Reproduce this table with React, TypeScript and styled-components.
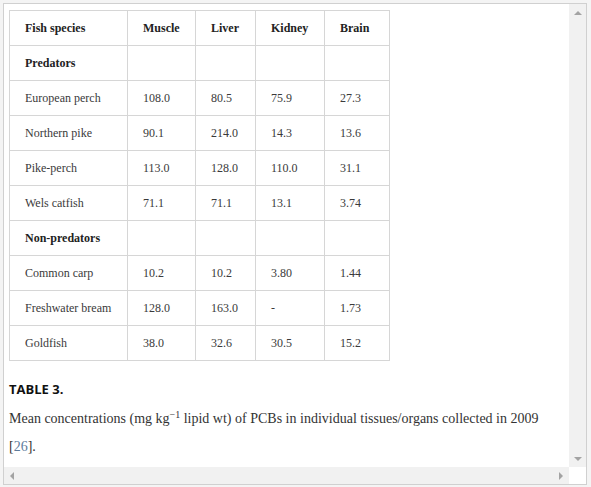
import React from "react";
import styled, { createGlobalStyle } from "styled-components";

const Global = createGlobalStyle`
  html, body { margin: 0; padding: 0; background: #f4f4f4; }
  body { font-family: "Liberation Serif", "Times New Roman", serif; }
`;

const Page = styled.div`
  padding: 3px 4px 2px 3px;
  width: 591px;
  height: 487px;
  box-sizing: border-box;
`;

const Frame = styled.div`
  box-sizing: border-box;
  width: 584px;
  height: 482px;
  border: 1px solid #d0d0d0;
  background: #fff;
  display: grid;
  grid-template-columns: 1fr 17px;
  grid-template-rows: 1fr 17px;
  overflow: hidden;
`;

const Content = styled.div`
  padding: 6px 5px 0 5px;
  overflow: hidden;
`;

const Table = styled.table`
  border-collapse: collapse;
  table-layout: fixed;
  font-family: "Liberation Serif", "Times New Roman", serif;
  font-size: 12px;
  color: #333;
`;

const Cell = styled.td<{ $w?: number; $head?: boolean }>`
  border: 1px solid #d6d6d6;
  height: 35px;
  padding: 0 0 0 15px;
  box-sizing: border-box;
  width: ${(p) => (p.$w ? `${p.$w}px` : "auto")};
  font-family: "Liberation Serif", "Times New Roman", serif;
  font-size: 12px;
  text-align: left;
  font-weight: ${(p) => (p.$head ? 700 : 400)};
  color: ${(p) => (p.$head ? "#222" : "#3a3a3a")};
  vertical-align: middle;
  white-space: nowrap;
`;

const Label = styled.div`
  margin-top: 19px;
  font-family: "Open Sans", "Liberation Sans", sans-serif;
  font-weight: 700;
  font-size: 13px;
  color: #111;
  line-height: 18px;
`;

const Caption = styled.p`
  margin: 7px 0 0 0;
  font-size: 14px;
  line-height: 28px;
  color: #333;
`;

const Sup = styled.sup`
  font-size: 10px;
  line-height: 0;
  vertical-align: 5px;
`;

const Ref = styled.span`
  color: #5d7b9b;
`;

const VBar = styled.div`
  background: #f1f1f1;
  display: flex;
  flex-direction: column;
  justify-content: space-between;
  align-items: center;
  padding: 7px 0 6px;
`;

const HBar = styled.div`
  background: #f1f1f1;
  display: flex;
  justify-content: space-between;
  align-items: center;
  padding: 0 6px 0 6px;
`;

const Corner = styled.div`
  background: #fff;
`;

const Arrow = styled.div<{ $dir: "up" | "down" | "left" | "right" }>`
  width: 0;
  height: 0;
  ${(p) =>
    p.$dir === "up"
      ? "border-left: 4px solid transparent; border-right: 4px solid transparent; border-bottom: 4px solid #a3a3a3;"
      : p.$dir === "down"
      ? "border-left: 4px solid transparent; border-right: 4px solid transparent; border-top: 4px solid #a3a3a3;"
      : p.$dir === "left"
      ? "border-top: 4px solid transparent; border-bottom: 4px solid transparent; border-right: 4px solid #a3a3a3;"
      : "border-top: 4px solid transparent; border-bottom: 4px solid transparent; border-left: 4px solid #a3a3a3;"}
`;

const widths = [118, 68, 60, 69, 65];
const header = ["Fish species", "Muscle", "Liver", "Kidney", "Brain"];

type Row = { group?: string; cells?: string[] };
const rows: Row[] = [
  { group: "Predators" },
  { cells: ["European perch", "108.0", "80.5", "75.9", "27.3"] },
  { cells: ["Northern pike", "90.1", "214.0", "14.3", "13.6"] },
  { cells: ["Pike-perch", "113.0", "128.0", "110.0", "31.1"] },
  { cells: ["Wels catfish", "71.1", "71.1", "13.1", "3.74"] },
  { group: "Non-predators" },
  { cells: ["Common carp", "10.2", "10.2", "3.80", "1.44"] },
  { cells: ["Freshwater bream", "128.0", "163.0", "-", "1.73"] },
  { cells: ["Goldfish", "38.0", "32.6", "30.5", "15.2"] },
];

export default function App() {
  return (
    <>
      <Global />
      <Page>
        <Frame>
          <Content>
            <Table>
              <thead>
                <tr>
                  {header.map((h, i) => (
                    <Cell as="th" key={h} $w={widths[i]} $head>
                      {h}
                    </Cell>
                  ))}
                </tr>
              </thead>
              <tbody>
                {rows.map((r, ri) =>
                  r.group ? (
                    <tr key={ri}>
                      <Cell $head>{r.group}</Cell>
                      <Cell />
                      <Cell />
                      <Cell />
                      <Cell />
                    </tr>
                  ) : (
                    <tr key={ri}>
                      {r.cells!.map((c, ci) => (
                        <Cell key={ci}>{c}</Cell>
                      ))}
                    </tr>
                  )
                )}
              </tbody>
            </Table>
            <Label>TABLE 3.</Label>
            <Caption>
              Mean concentrations (mg kg<Sup>−1</Sup> lipid wt) of PCBs in individual tissues/organs collected in 2009
              <br />[<Ref>26</Ref>].
            </Caption>
          </Content>
          <VBar>
            <Arrow $dir="up" />
            <Arrow $dir="down" />
          </VBar>
          <HBar>
            <Arrow $dir="left" />
            <Arrow $dir="right" />
          </HBar>
          <Corner />
        </Frame>
      </Page>
    </>
  );
}
